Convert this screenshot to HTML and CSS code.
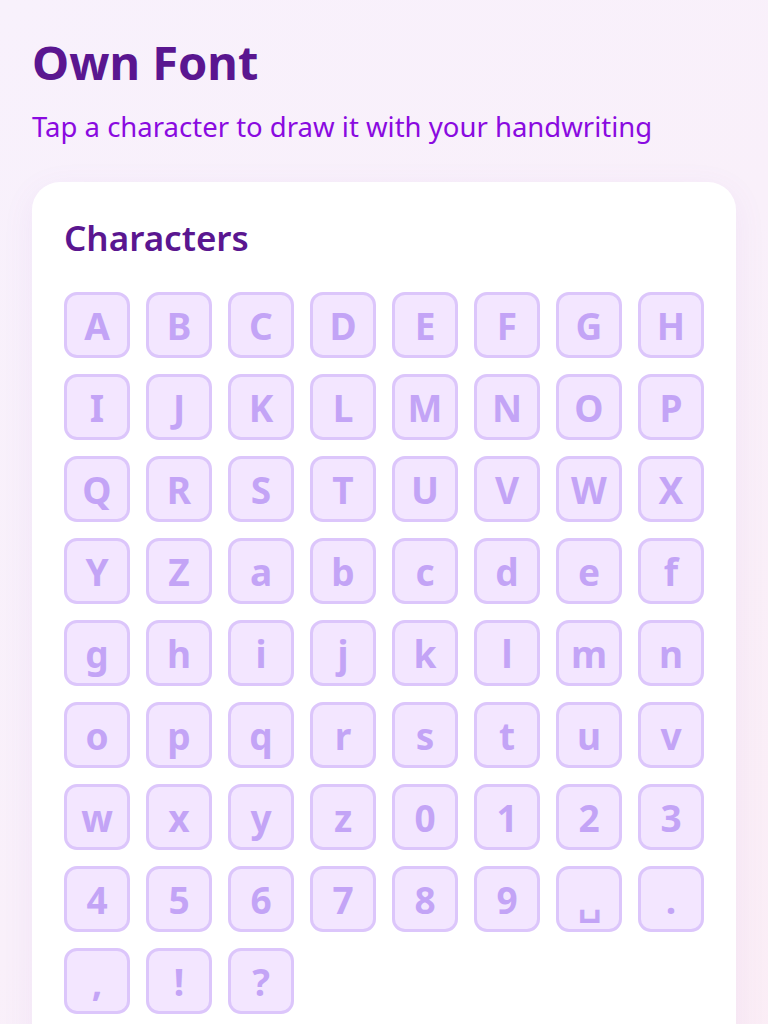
FILE: index.html
```html
<!DOCTYPE html>
<html lang="en">
<head>
<meta charset="utf-8">
<title>Own Font</title>
<link rel="stylesheet" href="styles.css">
</head>
<body>
<div class="page">
  <header class="header">
    <h1 class="title">Own Font</h1>
    <p class="subtitle">Tap a character to draw it with your handwriting</p>
  </header>
  <section class="card">
    <h2 class="card-title">Characters</h2>
    <div class="grid">
      <button class="tile">A</button><button class="tile">B</button><button class="tile">C</button><button class="tile">D</button><button class="tile">E</button><button class="tile">F</button><button class="tile">G</button><button class="tile">H</button>
      <button class="tile">I</button><button class="tile">J</button><button class="tile">K</button><button class="tile">L</button><button class="tile">M</button><button class="tile">N</button><button class="tile">O</button><button class="tile">P</button>
      <button class="tile">Q</button><button class="tile">R</button><button class="tile">S</button><button class="tile">T</button><button class="tile">U</button><button class="tile">V</button><button class="tile">W</button><button class="tile">X</button>
      <button class="tile">Y</button><button class="tile">Z</button><button class="tile">a</button><button class="tile">b</button><button class="tile">c</button><button class="tile">d</button><button class="tile">e</button><button class="tile">f</button>
      <button class="tile">g</button><button class="tile">h</button><button class="tile">i</button><button class="tile">j</button><button class="tile">k</button><button class="tile">l</button><button class="tile">m</button><button class="tile">n</button>
      <button class="tile">o</button><button class="tile">p</button><button class="tile">q</button><button class="tile">r</button><button class="tile">s</button><button class="tile">t</button><button class="tile">u</button><button class="tile">v</button>
      <button class="tile">w</button><button class="tile">x</button><button class="tile">y</button><button class="tile">z</button><button class="tile">0</button><button class="tile">1</button><button class="tile">2</button><button class="tile">3</button>
      <button class="tile">4</button><button class="tile">5</button><button class="tile">6</button><button class="tile">7</button><button class="tile">8</button><button class="tile">9</button><button class="tile">␣</button><button class="tile">.</button>
      <button class="tile">,</button><button class="tile">!</button><button class="tile">?</button>
    </div>
  </section>
</div>
</body>
</html>
```

FILE: styles.css
```css
html, body {
  margin: 0;
  padding: 0;
}
body {
  min-height: 1024px;
  background: linear-gradient(135deg, #f8f1fc 0%, #f9f0fa 50%, #fbedf5 100%);
  font-family: "Noto Sans", "Open Sans", sans-serif;
}
.page {
  padding: 32px 32px 0 32px;
}
.header {
  margin-bottom: 36px;
}
.title {
  margin: 0;
  font-size: 47px;
  line-height: 60px;
  font-weight: 700;
  color: #5a1690;
}
.subtitle {
  margin: 16px 0 0 0;
  font-size: 27.5px;
  line-height: 38px;
  color: #8a0ae0;
}
.card {
  background: #ffffff;
  border-radius: 28px;
  padding: 32px 32px 40px 32px;
  box-shadow: 0 8px 32px rgba(150, 90, 200, 0.08);
  min-height: 900px;
}
.card-title {
  margin: 0 0 30px 0;
  font-size: 35px;
  line-height: 48px;
  font-weight: 600;
  color: #5a1690;
}
.grid {
  display: grid;
  grid-template-columns: repeat(8, 66px);
  gap: 16px;
}
.tile {
  width: 66px;
  height: 66px;
  box-sizing: border-box;
  border: 3px solid #dcc6fb;
  border-radius: 13px;
  background: #f3e6ff;
  color: #c3a4f6;
  font-family: "Noto Sans", "Open Sans", sans-serif;
  font-size: 37px;
  font-weight: 700;
  padding: 0;
  display: flex;
  align-items: center;
  justify-content: center;
  line-height: 1;
}
```
